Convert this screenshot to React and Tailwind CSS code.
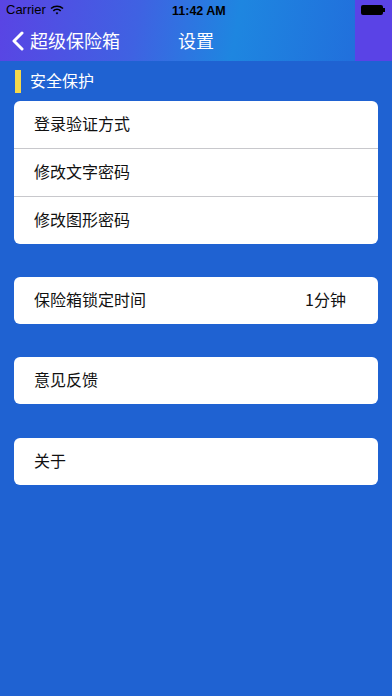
import React from 'react';

const font = { fontFamily: '"Noto Sans CJK SC", "Liberation Sans", sans-serif' };

function Row({ label, value, last, h = 'h-[47px]' }) {
  return (
    <div className={`${h} flex items-center justify-between pl-[20px] pr-[32px] pb-[3px] ${last ? '' : 'border-b border-[#c8c8cc]'}`}>
      <span className="text-[16px] text-[#111]">{label}</span>
      {value && <span className="text-[16px] text-[#111]">{value}</span>}
    </div>
  );
}

function Card({ children }) {
  return <div className="mx-[14px] bg-white rounded-[6px] overflow-hidden">{children}</div>;
}

export default function App() {
  return (
    <div className="w-[392px] h-[696px] bg-[#1f62d2] overflow-hidden" style={font}>
      {/* top bar */}
      <div className="h-[61px] flex bg-[linear-gradient(100deg,#5a44e4_0%,#3f62e2_35%,#1e86e0_60%,#2170dc_90%)]">
        <div className="flex-1 flex flex-col">
          <div className="h-[20px] flex items-center px-[6px] relative">
            <span className="text-black text-[13px]" style={{ fontFamily: '"Liberation Sans", sans-serif' }}>Carrier</span>
            <svg width="14" height="10" viewBox="0 0 14 10" className="ml-[4px]">
              <path d="M1 3.5a9 9 0 0 1 12 0" stroke="#000" strokeWidth="1.6" fill="none" />
              <path d="M3.3 5.8a5.6 5.6 0 0 1 7.4 0" stroke="#000" strokeWidth="1.6" fill="none" />
              <path d="M5.6 8a2 2 0 0 1 2.8 0L7 9.5z" fill="#000" />
            </svg>
            <span className="absolute left-[172px] top-[2px] text-black font-semibold text-[12.5px]" style={{ fontFamily: '"Liberation Sans", sans-serif' }}>11:42 AM</span>
          </div>
          <div className="flex-1 flex items-center relative">
            <svg width="12" height="20" viewBox="0 0 12 20" className="ml-[12px]">
              <path d="M10 2L2 10l8 8" stroke="#fff" strokeWidth="3" fill="none" strokeLinecap="round" strokeLinejoin="round" />
            </svg>
            <span className="ml-[6px] text-white text-[18px]">超级保险箱</span>
            <span className="absolute left-[178px] text-white text-[18px]">设置</span>
          </div>
        </div>
        <div className="w-[37px] bg-[#5a43e6] flex items-start pt-[5px] justify-start pl-[6px]">
          <div className="flex items-center">
            <div className="w-[22px] h-[10px] bg-black rounded-[2px]" />
            <div className="w-[2px] h-[4px] bg-black" />
          </div>
        </div>
      </div>

      {/* section header */}
      <div className="h-[40px] flex items-center">
        <div className="ml-[15px] w-[6px] h-[23px] bg-[#f5d84a]" />
        <span className="ml-[9px] text-white text-[16px] pb-[2px]">安全保护</span>
      </div>

      <Card>
        <Row label="登录验证方式" h="h-[48px]" />
        <Row label="修改文字密码" h="h-[48px]" />
        <Row label="修改图形密码" last />
      </Card>

      <div className="h-[33px]" />
      <Card>
        <Row label="保险箱锁定时间" value="1分钟" last />
      </Card>

      <div className="h-[33px]" />
      <Card>
        <Row label="意见反馈" last />
      </Card>

      <div className="h-[34px]" />
      <Card>
        <Row label="关于" last />
      </Card>
    </div>
  );
}
